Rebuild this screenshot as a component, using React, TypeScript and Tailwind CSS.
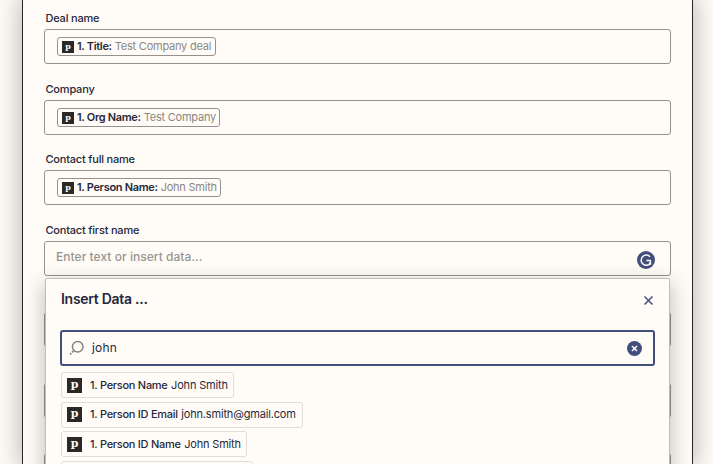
import React from "react";

type Field = { id: string; label?: string; source?: string; value?: string; gap: string; chip?: string };

const fields: Field[] = [
  { id: "deal", label: "Deal name", source: "1. Title:", value: "Test Company deal", gap: "mb-[18px]", chip: "w-[159px]" },
  { id: "company", label: "Company", source: "1. Org Name:", value: "Test Company", gap: "mb-[17px]", chip: "w-[163px]" },
  { id: "full", label: "Contact full name", source: "1. Person Name:", value: "John Smith", gap: "mb-[18px]", chip: "w-[164px]" },
  { id: "first", label: "Contact first name", gap: "mb-[18px]" },
  { id: "extra-1", gap: "mb-[18px]" },
  { id: "extra-2", gap: "mb-[17px]" },
  { id: "extra-3", gap: "mb-[18px]" },
];

const results = [
  { name: "1. Person Name", value: "John Smith", size: "w-[173px] h-[26px]" },
  { name: "1. Person ID Email", value: "john.smith@gmail.com", size: "w-[242px] h-[26px]" },
  { name: "1. Person ID Name", value: "John Smith", size: "w-[186px] h-[26px]" },
];

function AppIcon({ large = false }: { large?: boolean }) {
  return (
    <span
      className={
        "flex shrink-0 justify-center bg-[#2b2928] font-['DejaVu_Serif',serif] font-bold text-[#fffcf7] " +
        (large ? "h-[15px] w-[15px] text-[11px] leading-[13px]" : "h-[12px] w-[12px] text-[8px] leading-[10px]")
      }
    >
      p
    </span>
  );
}

function FieldRow({ field }: { field: Field }) {
  return (
    <div className={"shrink-0 " + field.gap}>
      <div className="ml-[1.5px] h-[18px] text-[11px] font-medium leading-[14px] tracking-[-0.2px]">{field.label}</div>
      <div className="flex h-[35px] items-center rounded-[3px] border border-[#95928e] pl-3">
        {field.source && (
          <div className={"flex h-[19px] items-center whitespace-nowrap rounded-[3px] border border-[#95928e] pl-1 text-[11px] " + field.chip}>
            <AppIcon />
            <span className="ml-[3px] font-semibold tracking-[-0.32px]">{field.source}</span>
            <span className="ml-[3px] tracking-[-0.22px] text-[#8a8783]">{field.value}</span>
          </div>
        )}
        {field.id === "first" && (
          <>
            <span className="-ml-px pb-[3px] text-[12px] font-medium tracking-[0.04px] text-[#979490]">Enter text or insert data...</span>
            <svg className="ml-auto mr-[15px] mt-[3px] h-[18px] w-[18px]" viewBox="0 0 18 18" fill="none">
              <circle cx="9" cy="9" r="9" fill="#434e7c" />
              <path d="M13 5.7A5.1 5.1 0 1 0 13.5 12" stroke="#fffcf7" strokeWidth="1.5" />
              <path d="M9.3 9.5H13.4V13.8" stroke="#fffcf7" strokeWidth="1.5" />
            </svg>
          </>
        )}
      </div>
    </div>
  );
}

export default function App() {
  return (
    <div className="relative h-[464px] w-[713px] overflow-hidden bg-[#fffcf7] font-['Inter',sans-serif] text-[#26283a]">
      <div className="ml-[22px] flex h-[464px] w-[671px] flex-col overflow-hidden border-x border-[#272629] bg-[#fffcf7] px-[21px] pt-[11px] shadow-[0_0_22px_3px_rgba(45,46,46,0.3)]">
        {fields.map((field) => (
          <FieldRow key={field.id} field={field} />
        ))}
      </div>

      {/* Data picker opened beneath the active field */}
      <div className="absolute left-0 top-[265px] h-[199px] w-full overflow-hidden px-[45px] pt-[13px]">
        <div className="h-[230px] w-[625px] rounded-t-[2px] border border-[#bebdba] bg-[#fffcf7] px-[14px] shadow-[0_6px_20px_1px_rgba(45,46,46,0.3)]">
          <div className="flex h-[51px] items-start justify-between pl-px pr-[1px] pt-[11px]">
            <h2 className="text-[14px] font-semibold leading-[18px] tracking-[-0.28px]">Insert Data ...</h2>
            <svg className="mr-[1.5px] mt-[5.5px] h-[9px] w-[9px]" viewBox="0 0 9 9" stroke="#434e7c" strokeWidth="1.5">
              <path d="M.5.5 8.5 8.5M8.5.5.5 8.5" />
            </svg>
          </div>
          <div className="flex h-[36px] items-center rounded-[3px] border-2 border-[#434e7c] pl-[7px] pr-[11.5px]">
            <svg className="h-[16px] w-[16px]" viewBox="0 0 16 16" fill="none" stroke="#86837f" strokeWidth="1.5">
              <circle cx="8.7" cy="6.8" r="5.3" />
              <path d="M4.6 11 3 12.4M2.3 13.2 1 14.4" strokeWidth="1.7" />
            </svg>
            <span className="ml-[7px] text-[12px] leading-[16px] tracking-[0.2px]">john</span>
            <svg className="ml-auto h-[15px] w-[15px]" viewBox="0 0 15 15">
              <circle cx="7.5" cy="7.5" r="7.5" fill="#434e7c" />
              <path d="M5 5 10 10M10 5 5 10" stroke="#fffcf7" strokeWidth="1.6" />
            </svg>
          </div>
          <div className="ml-px mt-[6px] flex flex-col items-start gap-[3.6px]">
            {results.map((result) => (
              <div key={result.name} className={"flex shrink-0 items-center whitespace-nowrap rounded-[3px] border border-[#dfddda] pl-[5px] text-[11px] " + result.size}>
                <AppIcon large />
                <span className="ml-2 font-medium tracking-[-0.27px]">{result.name}</span>
                <span className="ml-[3.5px] tracking-[-0.17px]">{result.value}</span>
              </div>
            ))}
            <div className="h-[26px] w-[192px] shrink-0 rounded-[3px] border border-[#dfddda]" />
          </div>
        </div>
      </div>
    </div>
  );
}
